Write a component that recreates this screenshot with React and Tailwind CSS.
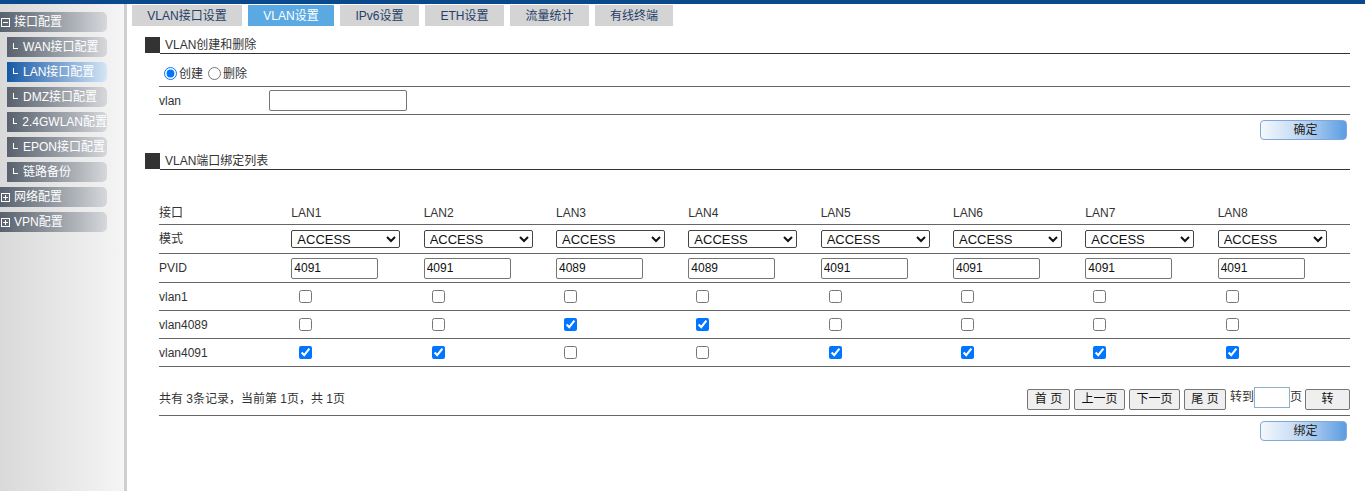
import { useState } from 'react';

const tabs = [
    { label: 'VLAN接口设置', w: 'w-[110px]' },
    { label: 'VLAN设置', w: 'w-[86px]', active: true },
    { label: 'IPv6设置', w: 'w-[79px]' },
    { label: 'ETH设置', w: 'w-[79px]' },
    { label: '流量统计', w: 'w-[79px]' },
    { label: '有线终端', w: 'w-[78px]' },
];

const subItems = ['WAN接口配置', 'LAN接口配置', 'DMZ接口配置', '2.4GWLAN配置', 'EPON接口配置', '链路备份'];

const ports = ['LAN1', 'LAN2', 'LAN3', 'LAN4', 'LAN5', 'LAN6', 'LAN7', 'LAN8'];
const pvids = ['4091', '4091', '4089', '4089', '4091', '4091', '4091', '4091'];
const vlanRows = [
    { name: 'vlan1', checked: [0, 0, 0, 0, 0, 0, 0, 0] },
    { name: 'vlan4089', checked: [0, 0, 1, 1, 0, 0, 0, 0] },
    { name: 'vlan4091', checked: [1, 1, 0, 0, 1, 1, 1, 1] },
];

const BoxIcon = ({ plus }) => (
    <svg width="9" height="9" viewBox="0 0 9 9" className="shrink-0">
        <rect x="0.5" y="0.5" width="8" height="8" fill="none" stroke="#fff" strokeWidth="1" />
        <line x1="2" y1="4.5" x2="7" y2="4.5" stroke="#fff" strokeWidth="1" />
        {plus && <line x1="4.5" y1="2" x2="4.5" y2="7" stroke="#fff" strokeWidth="1" />}
    </svg>
);

const TopItem = ({ label, plus }) => (
    <div className="h-[20px] w-[107px] mb-[5px] flex items-center pl-[1px] gap-[4px] rounded-r-[5px] bg-gradient-to-r from-[#58616d] to-[#d6d8db] text-white text-[12px]">
        <BoxIcon plus={plus} />
        <span>{label}</span>
    </div>
);

const SubItem = ({ label, active }) => (
    <div
        className={`h-[20px] w-[100px] ml-[7px] mb-[5px] flex items-center rounded-r-[5px] text-white text-[12px] bg-gradient-to-r ${
            active ? 'from-[#1059a5] to-[#d4e6f5]' : 'from-[#58616d] to-[#d6d8db]'
        }`}
    >
        <span className="w-[5px] h-[6px] ml-[6px] mr-[5px] mb-[2px] border-l border-b border-white" />
        <span className="whitespace-nowrap">{label}</span>
    </div>
);

const SectionTitle = ({ children }) => (
    <div className="flex h-[17px]">
        <div className="w-[15px] h-[16px] bg-[#333]" />
        <div className="flex-1 border-b border-[#333] pl-[5px] leading-[16px] text-[#333]">{children}</div>
    </div>
);

const BlueButton = ({ children }) => (
    <button className="w-[87px] h-[20px] rounded-[4px] border border-[#7fa8d8] bg-gradient-to-r from-[#f4f8fd] via-[#bcd6f1] to-[#5b9de2] text-[#222] text-[12px] leading-[18px] pl-[4px]">
        {children}
    </button>
);

const PageButton = ({ children, w }) => (
    <button className={`${w} h-[21px] rounded-[2px] border border-[#767676] bg-[#efefef] text-[#111] text-[12px] leading-[19px]`}>
        {children}
    </button>
);

const App = () => {
    const [mode, setMode] = useState('create');

    return (
        <div className="h-[491px] flex flex-col bg-white text-[12px] text-[#333] font-['Liberation_Sans','Noto_Sans_CJK_SC',sans-serif] overflow-hidden">
            <div className="h-[4px] bg-[#0a4a8c] shrink-0" />
            <div className="flex flex-1">
                {/* sidebar */}
                <aside className="w-[127px] shrink-0 pt-[8px] border-r-[3px] border-[#cfcfcf] bg-gradient-to-r from-[#d9d9d9] to-[#f5f5f5]">
                    <TopItem label="接口配置" />
                    {subItems.map((s) => (
                        <SubItem key={s} label={s} active={s === 'LAN接口配置'} />
                    ))}
                    <TopItem label="网络配置" plus />
                    <TopItem label="VPN配置" plus />
                </aside>

                {/* main */}
                <main className="flex-1 pl-[5px]">
                    <div className="flex gap-[6px] mt-[1px]">
                        {tabs.map((t) => (
                            <div
                                key={t.label}
                                className={`${t.w} h-[21px] flex items-center justify-center text-[12px] ${
                                    t.active ? 'bg-[#5aa9e3] text-white' : 'bg-[#d4d4d4] text-[#24406a]'
                                }`}
                            >
                                {t.label}
                            </div>
                        ))}
                    </div>

                    <div className="ml-[13px] mr-[15px] mt-[11px]">
                        <SectionTitle>VLAN创建和删除</SectionTitle>
                        <div className="ml-[14px]">
                            <div className="h-[33px] pt-[7px] flex items-center border-b border-[#666]">
                                <label className="flex items-center ml-[5px]">
                                    <input
                                        type="radio"
                                        name="op"
                                        className="m-0 w-[13px] h-[13px]"
                                        checked={mode === 'create'}
                                        onChange={() => setMode('create')}
                                    />
                                    <span className="ml-[2px]">创建</span>
                                </label>
                                <label className="flex items-center ml-[5px]">
                                    <input
                                        type="radio"
                                        name="op"
                                        className="m-0 w-[13px] h-[13px]"
                                        checked={mode === 'delete'}
                                        onChange={() => setMode('delete')}
                                    />
                                    <span className="ml-[2px]">删除</span>
                                </label>
                            </div>
                            <div className="h-[28px] flex items-center border-b border-[#666]">
                                <span className="w-[110px]">vlan</span>
                                <input className="w-[138px] h-[21px] border border-[#767676] rounded-[2px] bg-white px-[2px]" />
                            </div>
                            <div className="flex justify-end pt-[5px] pr-[3px]">
                                <BlueButton>确定</BlueButton>
                            </div>
                        </div>

                        <div className="mt-[13px]">
                            <SectionTitle>VLAN端口绑定列表</SectionTitle>
                        </div>
                        <div className="ml-[14px]">
                            <div className="mt-[26px]">
                                <div className="grid grid-cols-9 h-[29px] items-center pt-[5px] border-b border-[#666]">
                                    <span>接口</span>
                                    {ports.map((p) => (
                                        <span key={p}>{p}</span>
                                    ))}
                                </div>
                                <div className="grid grid-cols-9 h-[29px] items-center border-b border-[#666]">
                                    <span>模式</span>
                                    {ports.map((p) => (
                                        <div key={p}>
                                            <select
                                                defaultValue="ACCESS"
                                                className="w-[109px] h-[18px] border border-[#444] rounded-[2px] bg-white text-[#111] text-[13px] leading-[16px] pl-[1px]"
                                            >
                                                <option>ACCESS</option>
                                                <option>TRUNK</option>
                                            </select>
                                        </div>
                                    ))}
                                </div>
                                <div className="grid grid-cols-9 h-[29px] items-center border-b border-[#666]">
                                    <span>PVID</span>
                                    {pvids.map((v, i) => (
                                        <div key={i}>
                                            <input
                                                defaultValue={v}
                                                className="w-[87px] h-[21px] border border-[#767676] rounded-[2px] bg-white px-[2px] text-[#111]"
                                            />
                                        </div>
                                    ))}
                                </div>
                                {vlanRows.map((r) => (
                                    <div key={r.name} className="grid grid-cols-9 h-[28px] items-center border-b border-[#666]">
                                        <span>{r.name}</span>
                                        {r.checked.map((c, i) => (
                                            <div key={i} className="flex">
                                                <input
                                                    type="checkbox"
                                                    defaultChecked={!!c}
                                                    className="m-0 ml-[8px] w-[13px] h-[13px]"
                                                />
                                            </div>
                                        ))}
                                    </div>
                                ))}
                            </div>

                            <div className="flex items-center justify-between pt-[21px] pb-[5px] border-b border-[#666]">
                                <span>共有 3条记录，当前第 1页，共 1页</span>
                                <div className="flex items-center h-[22px]">
                                    <PageButton w="w-[43px]">首 页</PageButton>
                                    <div className="w-[4px]" />
                                    <PageButton w="w-[51px]">上一页</PageButton>
                                    <div className="w-[4px]" />
                                    <PageButton w="w-[51px]">下一页</PageButton>
                                    <div className="w-[4px]" />
                                    <PageButton w="w-[42px]">尾 页</PageButton>
                                    <span className="ml-[4px] self-start">转到</span>
                                    <input className="w-[36px] h-[21px] border border-[#8fb1c8] bg-white self-start -mt-[1px]" />
                                    <span className="self-start">页</span>
                                    <div className="w-[3px]" />
                                    <PageButton w="w-[45px]">转</PageButton>
                                </div>
                            </div>
                            <div className="flex justify-end pt-[5px] pr-[3px]">
                                <BlueButton>绑定</BlueButton>
                            </div>
                        </div>
                    </div>
                </main>
            </div>
        </div>
    );
};

export default App;
